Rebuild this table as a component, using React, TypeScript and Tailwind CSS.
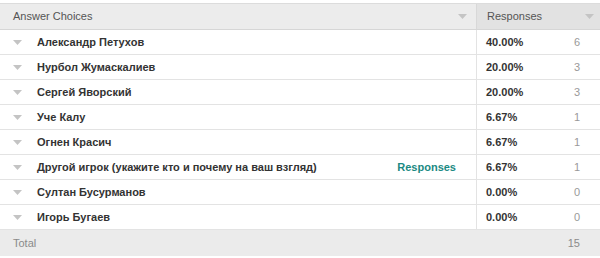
import React from "react";

type Row = { label: string; pct: string; count: number; link?: boolean };

const rows: Row[] = [
  { label: "Александр Петухов", pct: "40.00%", count: 6 },
  { label: "Нурбол Жумаскалиев", pct: "20.00%", count: 3 },
  { label: "Сергей Яворский", pct: "20.00%", count: 3 },
  { label: "Уче Калу", pct: "6.67%", count: 1 },
  { label: "Огнен Красич", pct: "6.67%", count: 1 },
  { label: "Другой игрок (укажите кто и почему на ваш взгляд)", pct: "6.67%", count: 1, link: true },
  { label: "Султан Бусурманов", pct: "0.00%", count: 0 },
  { label: "Игорь Бугаев", pct: "0.00%", count: 0 },
];

// small grey sort/expand caret
function Caret({ className = "" }: { className?: string }) {
  return (
    <svg width="9" height="5" viewBox="0 0 9 5" className={className}>
      <path d="M0 0h9L4.5 5z" fill="#c4c4c4" />
    </svg>
  );
}

export default function App() {
  return (
    <div
      className="w-[600px] h-[258px] bg-white pt-[3px] text-[11px] text-[#333]"
      style={{ fontFamily: '"Liberation Sans", Arial, sans-serif' }}
    >
      {/* header */}
      <div className="flex h-[27px] border-t border-[#dcdcdc] border-b border-b-[#d6d6d6]">
        <div className="flex-1 flex items-center justify-between pl-[13px] pr-[9px] bg-[#ececec] text-[#555]">
          <span>Answer Choices</span>
          <Caret />
        </div>
        <div className="w-[124px] flex items-center justify-between pl-[10px] pr-[6px] bg-[#e2e2e2] border-l border-[#d8d8d8] text-[#555]">
          <span>Responses</span>
          <Caret />
        </div>
      </div>

      {/* answers */}
      {rows.map((r) => (
        <div key={r.label} className="flex h-[25px] border-b border-[#e3e3e3]">
          <div className="flex-1 flex items-center pl-[13px] pr-[20px]">
            <Caret className="shrink-0" />
            <span className="ml-[15px] font-bold">{r.label}</span>
            {r.link && <span className="ml-auto font-bold text-[#1b8a83]">Responses</span>}
          </div>
          <div className="w-[124px] flex items-center justify-between pl-[9px] pr-[20px] border-l border-[#e3e3e3]">
            <span className="font-bold">{r.pct}</span>
            <span className="text-[#999]">{r.count}</span>
          </div>
        </div>
      ))}

      {/* total */}
      <div className="flex h-[26px] items-center justify-between pl-[13px] pr-[20px] bg-[#ebebeb] text-[#8a8a8a]">
        <span>Total</span>
        <span>15</span>
      </div>
    </div>
  );
}
